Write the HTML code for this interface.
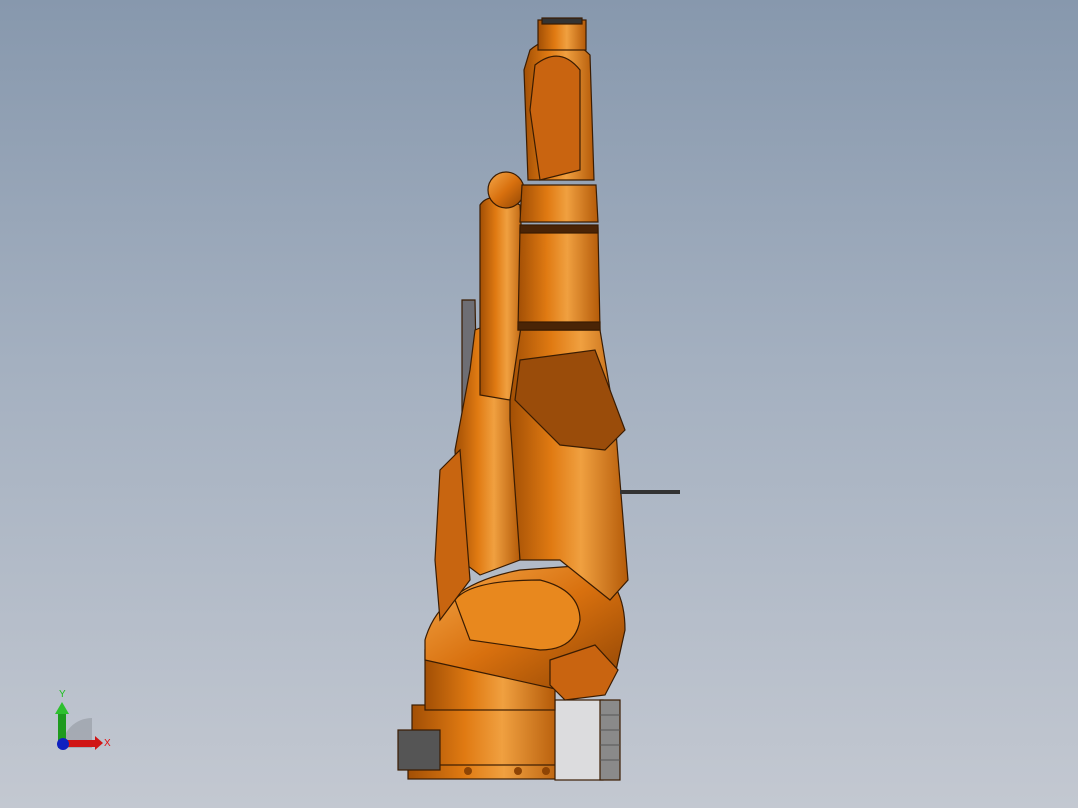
<!DOCTYPE html>
<html><head><meta charset="utf-8"><style>
html,body{margin:0;padding:0;}
body{width:1078px;height:808px;overflow:hidden;background:linear-gradient(to bottom,#8798ad 0%,#a4b0c0 45%,#c3c8d1 100%);font-family:"Liberation Sans",sans-serif;}
svg{position:absolute;left:0;top:0;}
</style></head><body>
<svg width="1078" height="808" viewBox="0 0 1078 808">
<defs>
<linearGradient id="o" x1="0" x2="1" y1="0" y2="0">
<stop offset="0" stop-color="#a24f05"/><stop offset="0.35" stop-color="#e07a12"/><stop offset="0.6" stop-color="#f0a040"/><stop offset="1" stop-color="#b45a08"/>
</linearGradient>
<linearGradient id="o2" x1="0" x2="1" y1="0" y2="1">
<stop offset="0" stop-color="#f5a84a"/><stop offset="0.5" stop-color="#d8700e"/><stop offset="1" stop-color="#8e4404"/>
</linearGradient>
</defs>
<g stroke="#3a1c02" stroke-width="1.2">
<!-- base -->
<rect x="412" y="705" width="150" height="70" fill="url(#o)"/>
<rect x="408" y="765" width="160" height="14" fill="url(#o)"/>
<rect x="555" y="700" width="48" height="80" fill="#dcdcde"/>
<rect x="600" y="700" width="20" height="80" fill="#8a8a8a"/>
<g stroke="#555" stroke-width="1"><line x1="600" y1="715" x2="620" y2="715"/><line x1="600" y1="730" x2="620" y2="730"/><line x1="600" y1="745" x2="620" y2="745"/><line x1="600" y1="760" x2="620" y2="760"/></g>
<rect x="398" y="730" width="42" height="40" fill="#555" />
<rect x="425" y="650" width="130" height="60" fill="url(#o)"/>
<!-- shoulder -->
<path d="M425 640 Q440 585 520 570 L590 565 Q625 580 625 630 L615 675 L560 690 L470 670 L425 660Z" fill="url(#o2)"/>
<path d="M455 600 Q470 580 540 580 Q580 590 580 620 Q575 650 540 650 L470 640Z" fill="#e8881e"/>
<path d="M550 660 L595 645 L618 670 L605 695 L565 700 L550 685Z" fill="#c96410"/>
<!-- lower arm -->
<path d="M462 300 L475 300 L478 460 L462 460Z" fill="#6e6e74"/>
<path d="M470 370 L475 330 L500 320 L510 340 L520 560 L480 575 L460 560 L455 450Z" fill="url(#o)"/>
<path d="M440 470 L460 450 L470 580 L440 620 L435 560Z" fill="#c86510"/>
<path d="M510 330 L600 330 L615 420 L628 580 L610 600 L560 560 L520 560 L510 420Z" fill="url(#o)"/>
<path d="M520 360 L595 350 L625 430 L605 450 L560 445 L515 400Z" fill="#9a4c0a"/>
<!-- upper arm -->
<path d="M480 205 Q490 190 520 205 L525 300 L510 400 L480 395Z" fill="url(#o)"/>
<circle cx="506" cy="190" r="18" fill="url(#o2)"/>
<path d="M520 228 L598 228 L600 330 L518 330Z" fill="url(#o)"/>
<rect x="520" y="225" width="78" height="8" fill="#4a2406"/>
<rect x="518" y="322" width="82" height="8" fill="#4a2406"/>
<!-- wrist -->
<path d="M522 185 L596 185 L598 222 L520 222Z" fill="url(#o)"/>
<path d="M530 50 Q560 25 590 55 L594 180 L528 180 L524 70Z" fill="url(#o)"/>
<path d="M535 65 Q560 45 580 70 L580 170 L540 180 L530 110Z" fill="#c96410"/>
<rect x="538" y="20" width="48" height="30" fill="url(#o)"/>
<rect x="542" y="18" width="40" height="6" fill="#333"/>
<!-- cable -->
<line x1="620" y1="492" x2="680" y2="492" stroke="#333" stroke-width="4"/>
</g>
<g fill="#8e4404"><circle cx="468" cy="771" r="4"/><circle cx="518" cy="771" r="4"/><circle cx="546" cy="771" r="4"/></g>
<!-- axis triad -->
<path d="M62 748 A30 30 0 0 1 92 718 L92 748Z" fill="#9aa0a8" opacity="0.7"/>
<rect x="58" y="712" width="8" height="36" fill="#1e9a1e"/>
<polygon points="55,714 62,702 69,714" fill="#2ec02e"/>
<rect x="62" y="740" width="34" height="7" fill="#d01515"/>
<polygon points="95,736 103,743 95,750" fill="#d01515"/>
<circle cx="63" cy="744" r="6" fill="#1020c0"/>
<text x="59" y="697" font-size="10" fill="#1ec01e">Y</text>
<text x="104" y="746" font-size="10" fill="#e01010">X</text>
</svg>
</body></html>
